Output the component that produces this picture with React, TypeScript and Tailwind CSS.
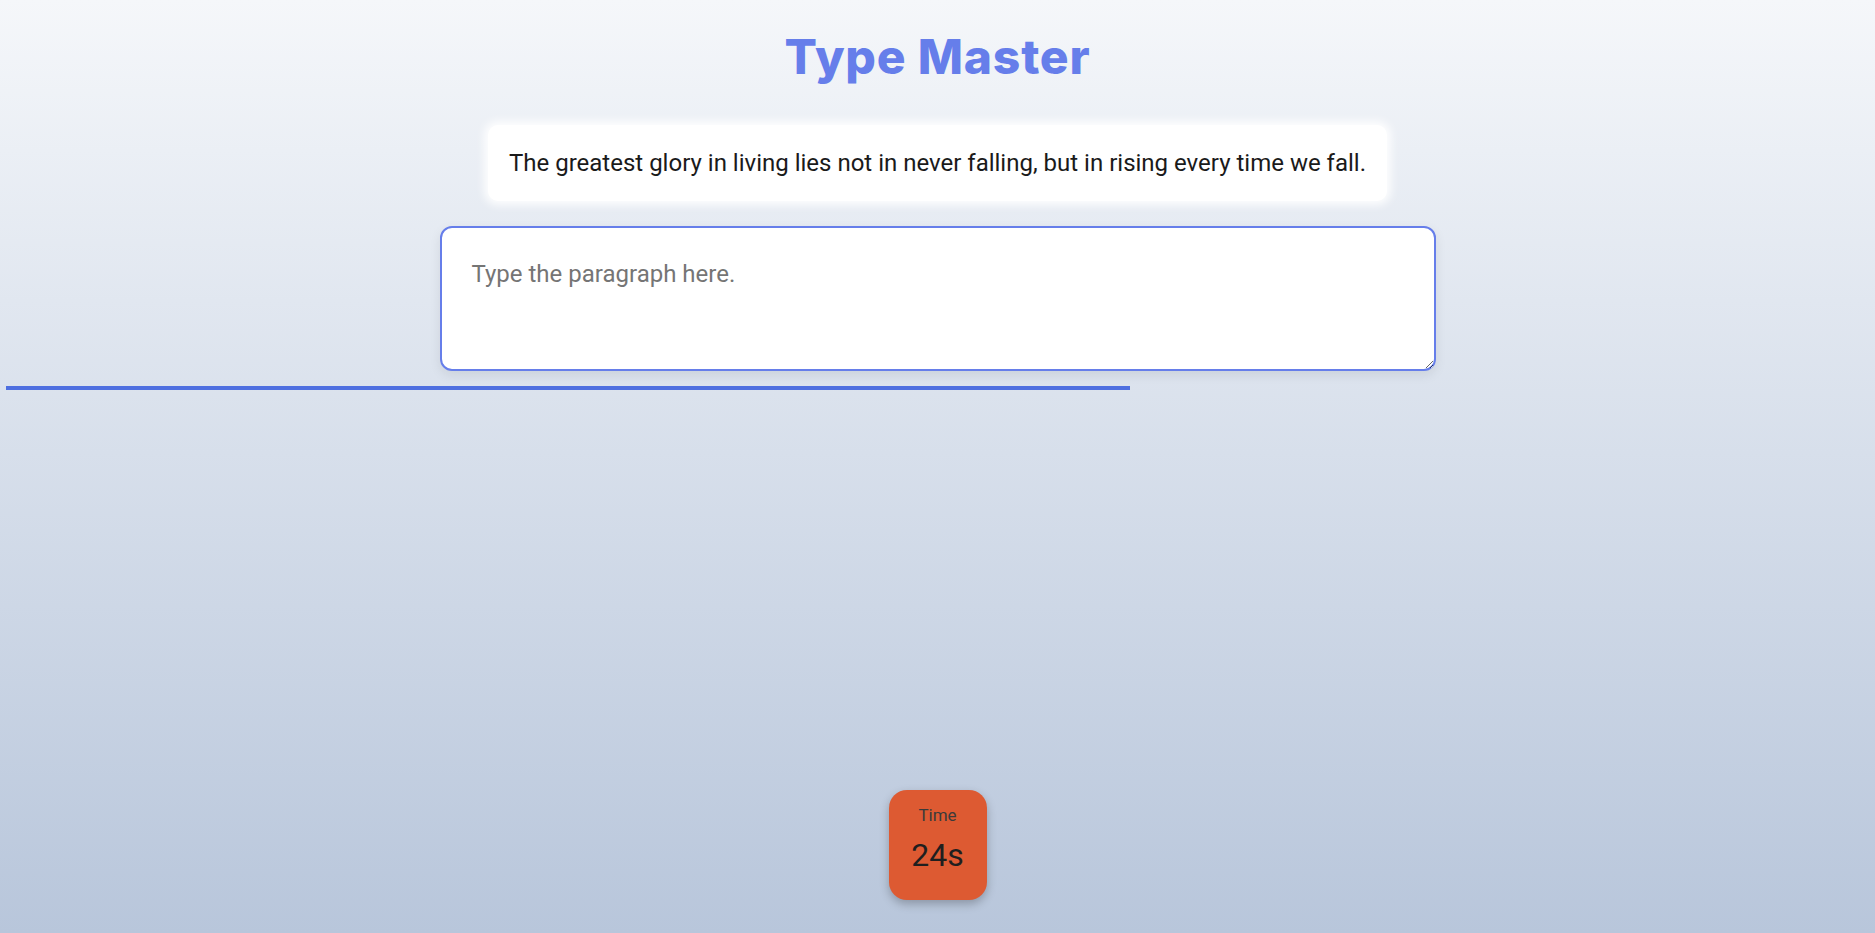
import React from "react";

const App: React.FC = () => {
  const quote =
    "The greatest glory in living lies not in never falling, but in rising every time we fall.";

  return (
    <div className="flex h-[933px] w-full flex-col bg-gradient-to-b from-[#f5f7fa] to-[#b8c6db] font-['Roboto',sans-serif]">
      {/* Title */}
      <h1 className="mt-[24px] text-center font-['Inter',sans-serif] text-[48px] font-extrabold leading-[66px] tracking-[0.8px] text-[#667eea]">
        Type Master
      </h1>

      {/* Quote */}
      <div className="mt-[35px] flex justify-center">
        <div className="rounded-[10px] bg-white px-[21px] py-[24px] shadow-[0_0_8px_4px_rgba(255,255,255,0.9)]">
          <p className="text-[24px] leading-[28px] text-[#1a1a1a]">{quote}</p>
        </div>
      </div>

      {/* Input */}
      <div className="mt-[25px] flex justify-center">
        <textarea
          autoFocus
          placeholder="Type the paragraph here."
          className="h-[145px] w-[996px] rounded-[12px] border-2 border-[#667eea] bg-white px-[30px] pt-[30px] pb-[20px] text-[24px] leading-[32px] text-[#222] shadow-[0_4px_12px_rgba(0,0,0,0.08)] outline-none placeholder:text-[#757575]"
        />
      </div>

      {/* Progress */}
      <div className="mt-[15px] ml-[6px] h-[4px] w-[1124px] bg-[#4e6fe0]" />

      {/* Timer */}
      <div className="mt-auto mb-[33px] flex justify-center">
        <div className="flex h-[110px] w-[98px] flex-col items-center rounded-[18px] bg-[#dd5a32] pt-[15px] shadow-[0_4px_10px_rgba(0,0,0,0.25)]">
          <span className="text-[17px] leading-[20px] text-[#3a3a3a]">Time</span>
          <span className="mt-[11px] text-[32px] leading-[38px] text-[#1f1f1f]">24s</span>
        </div>
      </div>
    </div>
  );
};

export default App;
